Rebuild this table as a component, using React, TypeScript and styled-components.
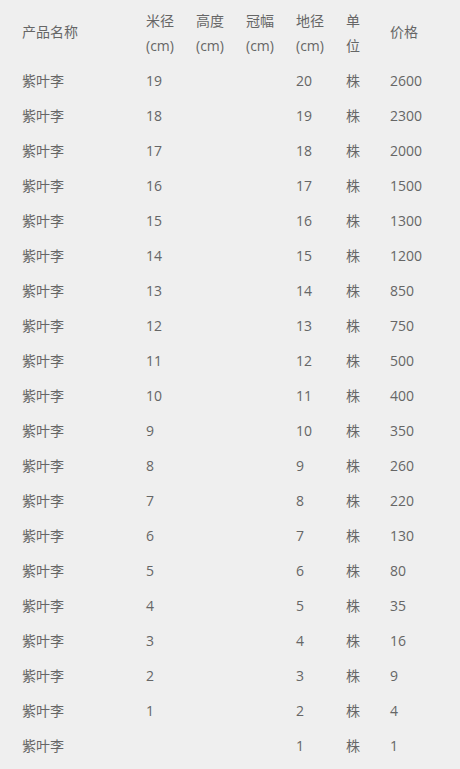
import styled, { createGlobalStyle } from 'styled-components';

const GlobalStyle = createGlobalStyle`
  html, body {
    margin: 0;
    padding: 0;
    background: #efefef;
  }
  body {
    font-family: "Open Sans", "Noto Sans CJK SC", sans-serif;
    font-size: 14px;
    color: #666;
  }
`;

const Table = styled.div`
  padding: 3px 0 0 22px;
`;

const Row = styled.div<{ $head?: boolean }>`
  display: grid;
  grid-template-columns: 124px 50px 50px 50px 50px 44px 1fr;
  align-items: center;
  padding: 5px 0;
  line-height: 25px;
`;

const Cell = styled.div`
  white-space: nowrap;
`;

const Single = styled(Cell)`
  margin-top: -3px;
`;

type Item = { mi: string; di: string; price: string };

const items: Item[] = [
  { mi: '19', di: '20', price: '2600' },
  { mi: '18', di: '19', price: '2300' },
  { mi: '17', di: '18', price: '2000' },
  { mi: '16', di: '17', price: '1500' },
  { mi: '15', di: '16', price: '1300' },
  { mi: '14', di: '15', price: '1200' },
  { mi: '13', di: '14', price: '850' },
  { mi: '12', di: '13', price: '750' },
  { mi: '11', di: '12', price: '500' },
  { mi: '10', di: '11', price: '400' },
  { mi: '9', di: '10', price: '350' },
  { mi: '8', di: '9', price: '260' },
  { mi: '7', di: '8', price: '220' },
  { mi: '6', di: '7', price: '130' },
  { mi: '5', di: '6', price: '80' },
  { mi: '4', di: '5', price: '35' },
  { mi: '3', di: '4', price: '16' },
  { mi: '2', di: '3', price: '9' },
  { mi: '1', di: '2', price: '4' },
  { mi: '', di: '1', price: '1' },
];

export default function App() {
  return (
    <>
      <GlobalStyle />
      <Table>
        <Row $head>
          <Single>产品名称</Single>
          <Cell>米径<br />(cm)</Cell>
          <Cell>高度<br />(cm)</Cell>
          <Cell>冠幅<br />(cm)</Cell>
          <Cell>地径<br />(cm)</Cell>
          <Cell>单<br />位</Cell>
          <Single>价格</Single>
        </Row>
        {items.map((it, i) => (
          <Row key={i}>
            <Cell>紫叶李</Cell>
            <Cell>{it.mi}</Cell>
            <Cell></Cell>
            <Cell></Cell>
            <Cell>{it.di}</Cell>
            <Cell>株</Cell>
            <Cell>{it.price}</Cell>
          </Row>
        ))}
      </Table>
    </>
  );
}
